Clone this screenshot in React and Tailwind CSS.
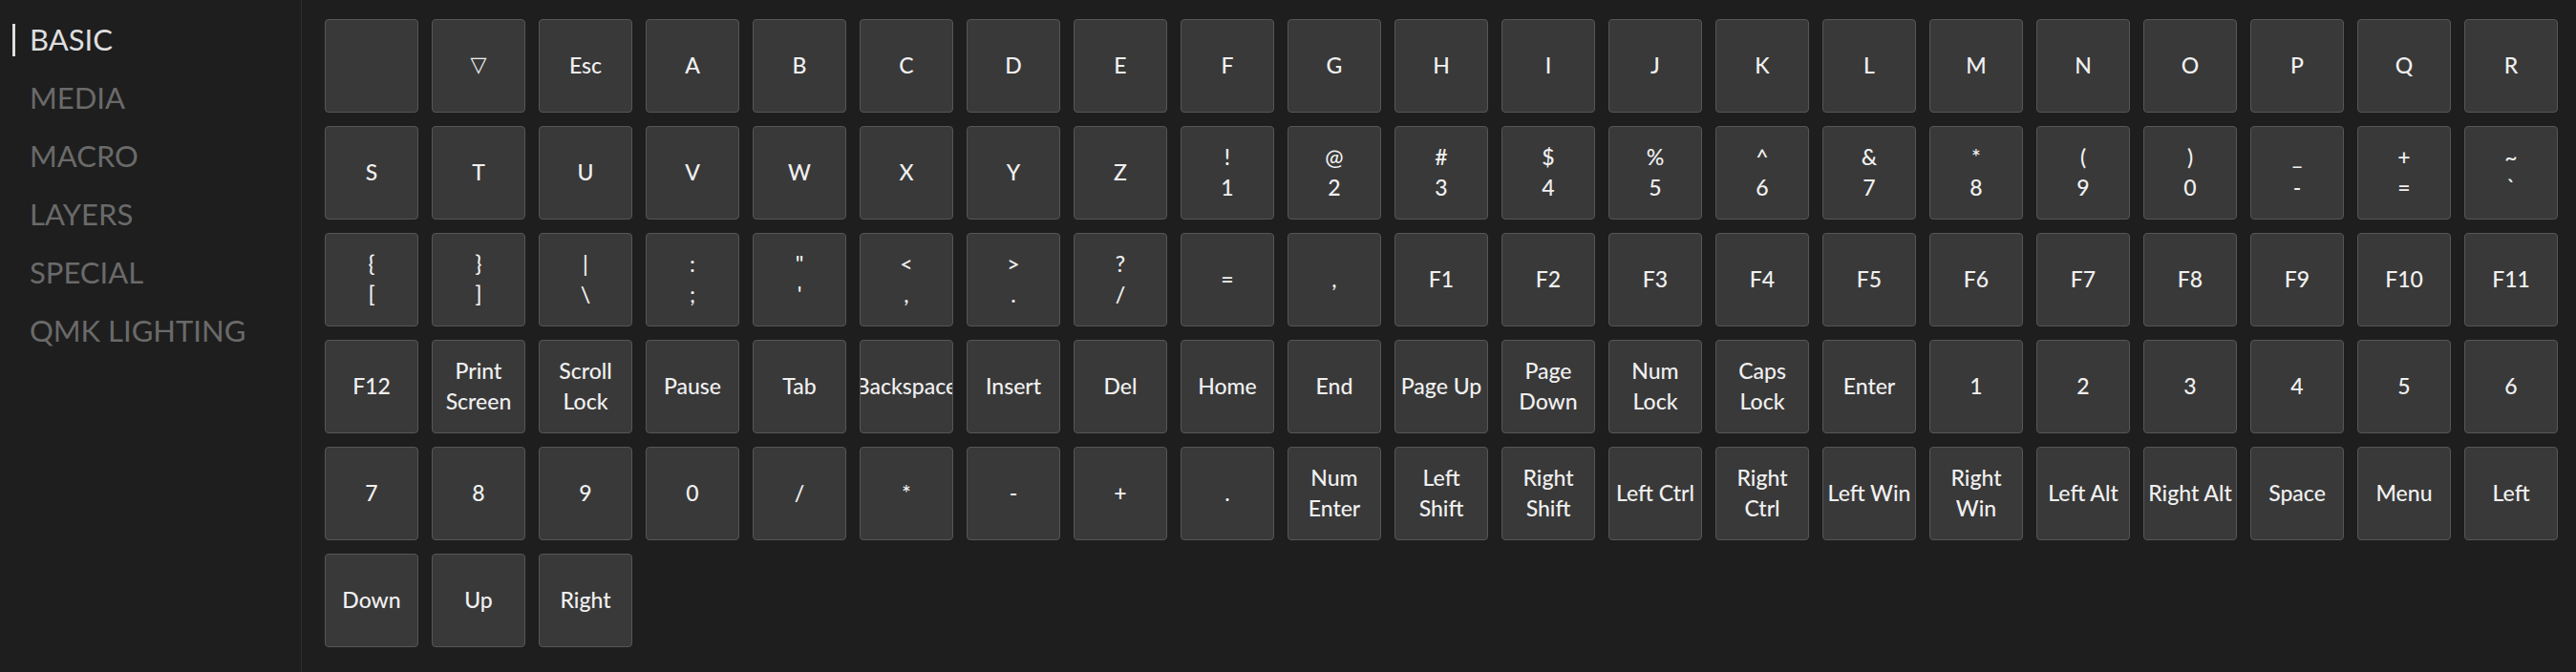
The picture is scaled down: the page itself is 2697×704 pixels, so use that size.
import React from "react";

const rows = [
  ["", "▽", "Esc", "A", "B", "C", "D", "E", "F", "G", "H", "I", "J", "K", "L", "M", "N", "O", "P", "Q", "R"],
  ["S", "T", "U", "V", "W", "X", "Y", "Z", ["!", "1"], ["@", "2"], ["#", "3"], ["$", "4"], ["%", "5"], ["^", "6"], ["&", "7"], ["*", "8"], ["(", "9"], [")", "0"], ["_", "-"], ["+", "="], ["~", "`"]],
  [["{", "["], ["}", "]"], ["|", "\\"], [":", ";"], ["\"", "'"], ["<", ","], [">", "."], ["?", "/"], "=", ",", "F1", "F2", "F3", "F4", "F5", "F6", "F7", "F8", "F9", "F10", "F11"],
  ["F12", ["Print", "Screen"], ["Scroll", "Lock"], "Pause", "Tab", "Backspace", "Insert", "Del", "Home", "End", "Page Up", ["Page", "Down"], ["Num", "Lock"], ["Caps", "Lock"], "Enter", "1", "2", "3", "4", "5", "6"],
  ["7", "8", "9", "0", "/", "*", "-", "+", ".", ["Num", "Enter"], ["Left", "Shift"], ["Right", "Shift"], "Left Ctrl", ["Right", "Ctrl"], "Left Win", ["Right", "Win"], "Left Alt", "Right Alt", "Space", "Menu", "Left"],
  ["Down", "Up", "Right"],
];

const keys = rows.flat();

const menu = ["BASIC", "MEDIA", "MACRO", "LAYERS", "SPECIAL", "QMK LIGHTING"];

function Key({ label }) {
  const lines = Array.isArray(label) ? label : [label];
  return (
    <div className="w-[98px] h-[98px] shrink-0 rounded-[4px] border border-[#565656] bg-[#393939] flex flex-col items-center justify-center pb-[3px] overflow-hidden text-[#f0f0f0] text-[23px] font-medium leading-[32px] text-center whitespace-nowrap">
      {lines.map((l, i) =>
        l === "▽" ? (
          <span key={i} className="font-['DejaVu_Sans',sans-serif] font-normal text-[22px]">
            {l}
          </span>
        ) : (
          <span key={i}>{l}</span>
        )
      )}
    </div>
  );
}

export default function App() {
  return (
    <div className="flex w-full h-screen bg-[#1e1e1e] font-['Lato','Noto_Sans',sans-serif] overflow-hidden">
      <div className="w-[316px] shrink-0 border-r border-[#2e2e2e] pt-[11px]">
        {menu.map((m, i) => (
          <div key={m} className="h-[61px] flex items-center pl-[13px]">
            <span
              className={
                i === 0
                  ? "h-[34px] flex items-center border-l-[3px] border-[#dedede] pl-[15px] text-[31px] text-[#dedede]"
                  : "h-[34px] flex items-center border-l-[3px] border-transparent pl-[15px] text-[31px] text-[#6a6a6a]"
              }
            >
              {m}
            </span>
          </div>
        ))}
      </div>
      <div className="flex-1 pl-[24px] pt-[20px]">
        <div className="flex flex-wrap content-start gap-[14px]">
          {keys.map((k, i) => (
            <Key key={i} label={k} />
          ))}
        </div>
      </div>
    </div>
  );
}
